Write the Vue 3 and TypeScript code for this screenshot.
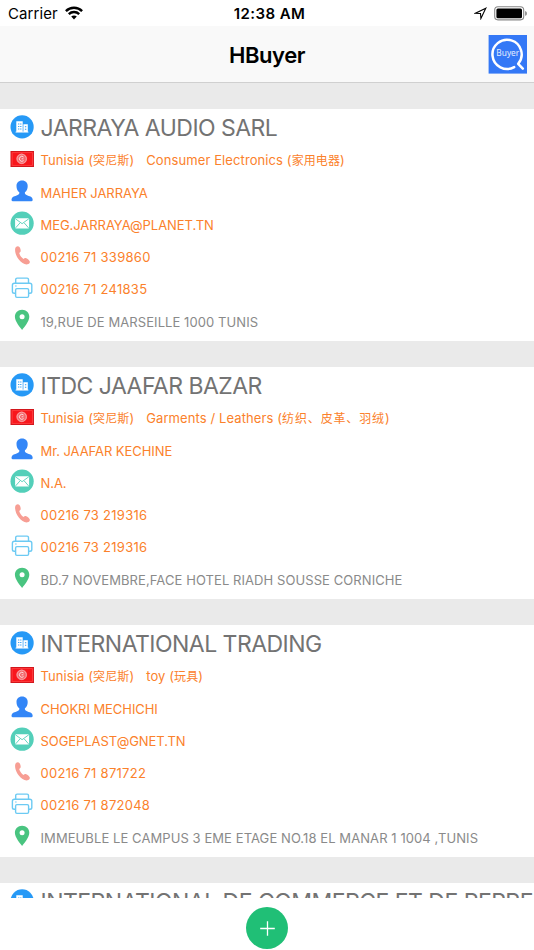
<script setup lang="ts">
type RowKind = 'flag' | 'person' | 'mail' | 'phone' | 'fax' | 'pin'

interface Row {
  kind: RowKind
  text: string
}

interface Term {
  latin: string
  chinese: string
}

interface Company {
  name: string
  tags: Term[]
  rows: Row[]
}

const tunisia: Term = { latin: 'Tunisia', chinese: '突尼斯' }

const companies: Company[] = [
  {
    name: 'JARRAYA AUDIO SARL',
    tags: [tunisia, { latin: 'Consumer Electronics', chinese: '家用电器' }],
    rows: [
      { kind: 'flag', text: '' },
      { kind: 'person', text: 'MAHER JARRAYA' },
      { kind: 'mail', text: 'MEG.JARRAYA@PLANET.TN' },
      { kind: 'phone', text: '00216 71 339860' },
      { kind: 'fax', text: '00216 71 241835' },
      { kind: 'pin', text: '19,RUE DE MARSEILLE 1000 TUNIS' },
    ],
  },
  {
    name: 'ITDC JAAFAR BAZAR',
    tags: [tunisia, { latin: 'Garments / Leathers', chinese: '纺织、皮革、羽绒' }],
    rows: [
      { kind: 'flag', text: '' },
      { kind: 'person', text: 'Mr. JAAFAR KECHINE' },
      { kind: 'mail', text: 'N.A.' },
      { kind: 'phone', text: '00216 73 219316' },
      { kind: 'fax', text: '00216 73 219316' },
      { kind: 'pin', text: 'BD.7 NOVEMBRE,FACE HOTEL RIADH SOUSSE CORNICHE' },
    ],
  },
  {
    name: 'INTERNATIONAL TRADING',
    tags: [tunisia, { latin: 'toy', chinese: '玩具' }],
    rows: [
      { kind: 'flag', text: '' },
      { kind: 'person', text: 'CHOKRI MECHICHI' },
      { kind: 'mail', text: 'SOGEPLAST@GNET.TN' },
      { kind: 'phone', text: '00216 71 871722' },
      { kind: 'fax', text: '00216 71 872048' },
      { kind: 'pin', text: 'IMMEUBLE LE CAMPUS 3 EME ETAGE NO.18 EL MANAR 1 1004 ,TUNIS' },
    ],
  },
  { name: 'INTERNATIONAL DE COMMERCE ET DE REPRE', tags: [], rows: [] },
]
</script>

<template>
  <div class="screen">
    <header class="status">
      <div class="carrier">
        <span>Carrier</span>
        <svg class="wifi" width="18" height="14" viewBox="0 0 18 14" fill="none" stroke="#000" stroke-width="2.4">
          <path d="M.9 5.1C5.4.7 12.6.7 17.1 5.1" />
          <path d="M3.8 8.1c2.9-2.8 7.5-2.8 10.4 0" />
          <path d="M6.2 10.6c1.6-1.5 4-1.5 5.6 0L9 13.4z" fill="#000" stroke="none" />
        </svg>
      </div>
      <span class="clock">12:38 AM</span>
      <div class="indicators">
        <svg width="13" height="13" viewBox="0 0 13 13" fill="none" stroke="#000" stroke-width="1.1" stroke-linejoin="miter">
          <path d="M11.8 1.2 1.5 6.2l5 .3.4 5z" />
        </svg>
        <svg width="33" height="15" viewBox="0 0 33 15">
          <rect x=".7" y=".7" width="29" height="13.2" rx="3.3" fill="none" stroke="#888" stroke-width="1.1" />
          <rect x="2.4" y="2.4" width="25.6" height="9.8" rx="1.5" />
          <path d="M31.1 5v4.8c1.4-.5 1.8-1.4 1.8-2.4s-.4-1.9-1.8-2.4" fill="#888" />
        </svg>
      </div>
    </header>

    <nav class="nav">
      <h1>HBuyer</h1>
      <svg class="logo" width="39" height="39" viewBox="0 0 39 39">
        <rect x=".6" width="38.4" height="38.6" fill="#3478f6" />
        <path d="M26.2 32.1A14.6 14.6 0 1 1 30.2 28.8L34.8 33.6" fill="none" stroke="#fff" stroke-width="2.5" stroke-linecap="round" stroke-linejoin="round" />
        <text x="19.8" y="21.2" text-anchor="middle" fill="#e4edff" class="logo-text">Buyer</text>
      </svg>
    </nav>

    <main class="list">
      <article v-for="company in companies" :key="company.name" class="card">
        <div class="title-row">
          <svg width="24" height="24" viewBox="0 0 24 24">
            <circle cx="12.1" cy="11.9" r="11.6" fill="#2699f6" />
            <path d="M6.3 6.2h6.4v10.9H6.3zM13.4 9.3h4.4v7.8h-4.4z" fill="#fff" />
            <path d="M5.6 17.1h12.8" stroke="#fff" stroke-width=".9" />
            <path d="M8.1 9h1.2M10.2 9h1.2M8.1 11.5h1.2M10.2 11.5h1.2M8.1 14h1.2M10.2 14h1.2M14.9 11.8h1.4M14.9 14.2h1.4" stroke="#2699f6" stroke-width="1.1" fill="none" />
          </svg>
          <h2>{{ company.name }}</h2>
        </div>
        <div v-for="row in company.rows" :key="row.kind" class="row" :class="row.kind">
          <span class="icon">
            <svg v-if="row.kind === 'flag'" width="24" height="16" viewBox="0 0 24 16">
              <rect x="1" y=".5" width="22.6" height="15" fill="#f8161c" stroke="#d2161c" />
              <rect x="2.1" y="1.7" width="20.4" height="12.6" fill="none" stroke="#ff4a4a" stroke-width=".7" />
              <circle cx="11.7" cy="7.8" r="5.4" fill="#f4686c" />
              <circle cx="11.7" cy="7.8" r="4.6" fill="none" stroke="#f9a3a5" stroke-width="1" />
              <path d="M13.6 6a2.5 2.5 0 1 0 0 3.6M13.4 7.8h-1.8" fill="none" stroke="#fff" stroke-opacity=".75" />
            </svg>
            <svg v-else-if="row.kind === 'person'" width="24" height="22" viewBox="0 0 24 22" fill="#3386f7">
              <path d="M12.1.4C8.5.4 6.5 2.8 6.5 5.9c0 2.7 1 5 2.8 6.3v1.2c-.5 1.6-3.3 2-5.6 3.1-1.7.8-2.1 2-2.2 3.6q0 1.1 1.1 1.1h19q1.1 0 1.1-1.1c-.1-1.6-.5-2.8-2.2-3.6-2.3-1.1-5.1-1.5-5.6-3.1v-1.2c1.8-1.3 2.8-3.6 2.8-6.3C17.7 2.8 15.7.4 12.1.4z" />
            </svg>
            <svg v-else-if="row.kind === 'mail'" width="24" height="24" viewBox="0 0 24 24">
              <circle cx="12.1" cy="12.2" r="11.6" fill="#53cfb9" />
              <rect x="5.1" y="7.2" width="14" height="10.2" rx="1" fill="#fff" />
              <path d="m5.3 7.7 6.8 5 6.8-5M5.6 16.9l4.4-5M18.6 16.9l-4.4-5" fill="none" stroke="#53cfb9" stroke-width=".9" />
            </svg>
            <svg v-else-if="row.kind === 'phone'" width="24" height="22" viewBox="0 0 24 22" fill="#f79e94">
              <path d="M6 2c1.1-1 2.5-1 3.4-.1.8.9 1.3 2.6 1.3 3.8 0 1.1-.6 1.7-1.5 2.3.7 2.5 2.1 4.4 4.2 5.9.9-.7 1.9-1 2.9-.6 1.3.5 3 1.9 3.4 3 .4 1.2-.2 2.3-1.4 2.8-2.9 1.2-6.7-.9-9.5-4.6C5.7 10.9 3.9 4.1 6 2z" />
            </svg>
            <svg v-else-if="row.kind === 'fax'" width="24" height="22" viewBox="0 0 24 22" fill="none" stroke="#6ccaf3" stroke-width="1.4" stroke-linejoin="round">
              <path d="M5.7 6.2V2.5q0-1.4 1.4-1.4h10q1.4 0 1.4 1.4v3.7M5.5 16.3H4.2q-1.8 0-1.8-1.8V8.3q0-2 2-2h15.4q2 0 2 2v6.2q0 1.8-1.8 1.8h-1.3" />
              <rect x="5.6" y="11.6" width="13" height="8.8" rx="1.3" />
              <path d="M5 9h1.7" stroke-width=".9" />
            </svg>
            <svg v-else width="24" height="22" viewBox="0 0 24 22">
              <path d="M12.1.8c-4.2 0-7.2 3-7.2 7 0 4.6 5.3 10.7 7.2 13.2 1.9-2.5 7.2-8.6 7.2-13.2 0-4-3-7-7.2-7z" fill="#49c480" />
              <circle cx="12.1" cy="7.8" r="2.5" fill="#fff" />
            </svg>
          </span>
          <template v-if="row.kind === 'flag'">
            <span v-for="tag in company.tags" :key="tag.latin" class="label tag">
              {{ tag.latin }} (<span class="chinese" :class="{ listed: tag.chinese.includes('、') }">{{ tag.chinese }}</span>)
            </span>
          </template>
          <span v-else class="label">{{ row.text }}</span>
        </div>
      </article>
    </main>

    <footer class="bar">
      <button class="add" aria-label="+">
        <svg width="15" height="15" viewBox="0 0 15 15" stroke="#fff" stroke-width="1.3">
          <path d="M.2 7.5h14.6M7.5.2v14.6" />
        </svg>
      </button>
    </footer>
  </div>
</template>

<style>
body {
  margin: 0;
}
</style>

<style scoped>
.screen {
  display: flex;
  flex-direction: column;
  width: 534px;
  height: 950px;
  overflow: hidden;
  background: #fff;
  font-family: Inter, "Noto Sans CJK SC", sans-serif;
}
.status {
  display: grid;
  grid-template-columns: 1fr auto 1fr;
  align-items: center;
  flex: none;
  height: 26px;
  padding: 2px 7px 0 8px;
  box-sizing: border-box;
  font-size: 15px;
  line-height: 24px;
}
.carrier {
  display: flex;
  align-items: center;
  gap: 7px;
  letter-spacing: 0.1px;
}
.wifi {
  margin-bottom: 2px;
}
.clock {
  padding-left: 4px;
  font-weight: 600;
  letter-spacing: 0.45px;
}
.indicators {
  display: flex;
  align-items: center;
  justify-content: flex-end;
  gap: 7px;
  padding-bottom: 1px;
}
.nav {
  display: grid;
  grid-template-columns: 1fr auto 1fr;
  align-items: center;
  flex: none;
  height: 57px;
  padding: 0 7px;
  box-sizing: border-box;
  background: #f9f9f9;
  border-bottom: 1px solid #d0d0d0;
}
.nav h1 {
  grid-column: 2;
  margin: 0;
  padding-top: 1px;
  font-size: 22px;
  font-weight: 600;
  line-height: 30px;
  letter-spacing: -0.45px;
}
.logo {
  justify-self: end;
}
.logo-text {
  font-family: "Noto Sans", sans-serif;
  font-size: 8.3px;
}
.list {
  display: flex;
  flex-direction: column;
  flex: 1;
  gap: 26px;
  min-height: 0;
  overflow: hidden;
  padding-top: 26px;
  background: #eaeaea;
}
.card {
  flex: none;
  height: 232px;
  background: #fff;
}
.title-row {
  display: flex;
  align-items: center;
  gap: 6.5px;
  height: 35px;
  padding-left: 10px;
}
.title-row svg {
  flex: none;
}
.title-row h2 {
  margin: 0;
  padding-top: 3px;
  color: #737373;
  font-size: 23px;
  font-weight: 400;
  line-height: 30px;
  letter-spacing: -0.53px;
  white-space: nowrap;
}
.row {
  display: flex;
  align-items: center;
  height: 32.2px;
  padding-left: 10px;
  color: #fb812b;
  font-size: 13px;
  letter-spacing: 0.1px;
  white-space: nowrap;
}
.icon {
  display: flex;
  align-items: center;
  justify-content: center;
  width: 24px;
  height: 24px;
  margin-right: 6.5px;
  padding-bottom: 2px;
}
.label {
  padding-top: 1px;
  line-height: 20px;
}
.person,
.mail {
  letter-spacing: -0.06px;
}
.phone,
.fax {
  letter-spacing: 0.27px;
}
.pin {
  color: #8a8a8a;
  letter-spacing: 0.08px;
}
.tag + .tag {
  margin-left: 12px;
}
.chinese {
  font-size: 12px;
}
.chinese.listed {
  letter-spacing: 0.85px;
}
.bar {
  display: flex;
  justify-content: center;
  flex: none;
  height: 52px;
  padding-top: 9px;
  box-sizing: border-box;
  background: #fff;
}
.add {
  display: flex;
  align-items: center;
  justify-content: center;
  width: 42px;
  height: 42px;
  padding: 0;
  border: 0;
  border-radius: 50%;
  background: #20bf76;
}
</style>
